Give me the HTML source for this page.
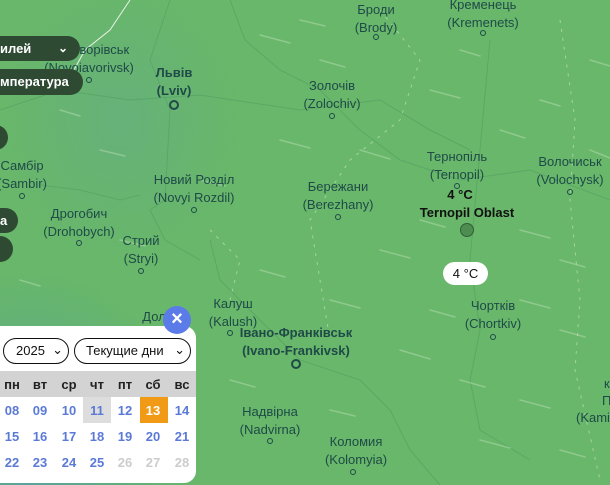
<!DOCTYPE html>
<html><head><meta charset="utf-8"><style>
*{margin:0;padding:0;box-sizing:border-box}
body{width:610px;height:485px;overflow:hidden;position:relative;font-family:"Liberation Sans","Noto Sans CJK SC",sans-serif;
background:radial-gradient(ellipse 170px 210px at 30px 480px,#5aa39c 0%,#60ad80 50%,rgba(103,182,106,0) 100%),radial-gradient(ellipse 120px 140px at 120px 120px,rgba(100,170,140,.45),rgba(103,182,106,0)),#68b76a}
.c{position:absolute;transform:translateX(-50%);text-align:center;color:#1f4a48;font-size:13px;line-height:17.5px;white-space:nowrap}
.b{font-weight:bold;font-size:13px}
.d{position:absolute;width:6px;height:6px;border:1.3px solid #1f4a48;border-radius:50%;transform:translate(-50%,-50%)}
.D{position:absolute;width:10px;height:10px;border:2px solid #1f4a48;border-radius:50%;transform:translate(-50%,-50%)}
.btn{position:absolute;background:#2e4a33;color:#fff;font-weight:bold;font-size:13px;border-radius:0 13px 13px 0;line-height:25px;padding-left:0}
svg{position:absolute;left:0;top:0}
.cal{position:absolute;left:0;top:326px;width:196px;height:157px;background:#fff;border-radius:0 12px 12px 0}
.sel{position:absolute;top:12px;height:26px;border:1.3px solid #111;border-radius:13px;font-size:13px;line-height:24px;color:#111}
.hdr{position:absolute;top:45px;left:0;width:196px;height:26px;background:#d3d3d3}
.t{position:absolute;width:28px;text-align:center;font-weight:bold;font-size:13px}
</style></head><body>
<svg width="610" height="485">
<g stroke="#4f9a60" stroke-width="1" fill="none" opacity=".5">
<path d="M170 0 L150 60 L170 110 L165 200 L150 210 L165 240 L200 260"/>
<path d="M0 110 L60 90 L130 100 L200 95 L300 110 L380 100 L430 130 L470 150"/>
<path d="M40 185 L80 190 L120 200 L140 195"/>
<path d="M230 0 L245 40 L280 70 L320 90 L360 130 L400 160 L460 180 L530 170 L610 200"/>
<path d="M490 40 L480 150 L470 260 L480 330 L470 380 L480 430 L530 460"/>
<path d="M210 240 L220 280 L260 320 L300 360 L360 380 L390 410 L410 450 L440 485"/>
</g>
<g stroke="#cfe8c4" stroke-width="1" fill="none" stroke-dasharray="3 6" opacity=".6">
<path d="M380 10 L420 60 L400 120 L350 160 L310 220 L320 280 L330 340"/>
<path d="M560 20 L575 120 L570 200 L580 300 L575 370 L600 480"/>
<path d="M210 230 L240 260 L230 300"/>
</g>
<g stroke="#c9e6c2" stroke-width="1.5" stroke-linecap="round" opacity=".4">
<path d="M260 35 l30 8M320 60 l25 7M430 90 l30 8M500 130 l25 8M540 100 l20 6M590 150 l20 8M280 140 l30 8M200 180 l25 6M360 150 l30 9M420 220 l25 7M520 230 l30 8M560 260 l25 7M380 250 l30 8M260 270 l25 7M330 300 l30 8M430 310 l25 7M520 300 l30 8M560 330 l25 7M400 350 l30 9M460 380 l25 7M520 400 l30 8M330 410 l25 6M230 380 l25 7M480 440 l30 8M560 450 l25 7M100 150 l25 6M60 110 l20 6M300 20 l25 6M460 50 l20 6M590 60 l20 6M120 240 l25 6M20 280 l20 6"/>
</g>
<path d="M130 0 L110 30 L85 50 L60 95" stroke="#e8f3e3" stroke-width="1" fill="none"/>
</svg>

<div class="c" style="left:376px;top:1px">Броди<br>(Brody)</div><div class="d" style="left:376px;top:37px"></div>
<div class="c" style="left:483px;top:-4px">Кременець<br>(Kremenets)</div><div class="d" style="left:483px;top:33px"></div>
<div class="c" style="left:89px;top:41px">Нововорівськ<br>(Novoiavorivsk)</div><div class="d" style="left:89px;top:80px"></div>
<div class="c b" style="left:174px;top:64px">Львів<br>(Lviv)</div><div class="D" style="left:174px;top:105px"></div>
<div class="c" style="left:332px;top:77px">Золочів<br>(Zolochiv)</div><div class="d" style="left:332px;top:116px"></div>
<div class="c" style="left:22px;top:157px">Самбір<br>(Sambir)</div><div class="d" style="left:22px;top:196px"></div>
<div class="c" style="left:194px;top:171px">Новий Розділ<br>(Novyi Rozdil)</div><div class="d" style="left:194px;top:210px"></div>
<div class="c" style="left:338px;top:178px">Бережани<br>(Berezhany)</div><div class="d" style="left:338px;top:217px"></div>
<div class="c" style="left:457px;top:148px">Тернопіль<br>(Ternopil)</div><div class="d" style="left:457px;top:186px"></div>
<div class="c" style="left:570px;top:153px">Волочиськ<br>(Volochysk)</div><div class="d" style="left:570px;top:192px"></div>
<div class="c" style="left:79px;top:205px">Дрогобич<br>(Drohobych)</div><div class="d" style="left:79px;top:243px"></div>
<div class="c" style="left:141px;top:232px">Стрий<br>(Stryi)</div><div class="d" style="left:141px;top:271px"></div>
<div class="c" style="left:233px;top:295px">Калуш<br>(Kalush)</div><div class="d" style="left:230px;top:333px"></div>
<div class="c b" style="left:296px;top:324px">Івано-Франківськ<br>(Ivano-Frankivsk)</div><div class="D" style="left:296px;top:364px"></div>
<div class="c" style="left:493px;top:297px">Чортків<br>(Chortkiv)</div><div class="d" style="left:493px;top:337px"></div>
<div class="c" style="left:270px;top:403px">Надвірна<br>(Nadvirna)</div><div class="d" style="left:270px;top:441px"></div>
<div class="c" style="left:356px;top:433px">Коломия<br>(Kolomyia)</div><div class="d" style="left:353px;top:472px"></div>
<div class="c" style="left:154px;top:308px">Дол</div>
<div class="c" style="top:375px;transform:none;left:604px">к</div>
<div class="c" style="left:602px;top:392px;transform:none">П</div>
<div class="c" style="left:576px;top:409px;transform:none">(Kami</div>

<div class="c b" style="left:460px;top:186px;color:#111;font-size:13px">4 °C</div>
<div class="c b" style="left:467px;top:204px;color:#111;font-size:13px">Ternopil Oblast</div>
<div style="position:absolute;left:460px;top:223px;width:14px;height:14px;border-radius:50%;background:#4e8d52;border:1px solid #2f5f35"></div>
<div style="position:absolute;left:443px;top:262px;width:45px;height:23px;border-radius:12px;background:#fff;color:#111;font-size:13px;line-height:23px;text-align:center">4 °C</div>

<div class="btn" style="left:-10px;top:36px;width:90px;height:25px;padding-left:10px">илей<span style="position:absolute;left:68px;top:0;font-size:12px">&#8964;</span></div>
<div class="btn" style="left:-10px;top:69px;width:93px;height:26px;padding-left:10px">мпература</div>
<div class="btn" style="left:-20px;top:125px;width:28px;height:25px"></div>
<div class="btn" style="left:-20px;top:208px;width:38px;height:25px;padding-left:20px">а</div>
<div class="btn" style="left:-20px;top:236px;width:33px;height:26px"></div>

<div class="cal">
<div class="sel" style="left:3px;width:66px;padding-left:12px">2025<span style="position:absolute;right:5px;top:-1px">&#8964;</span></div>
<div class="sel" style="left:74px;width:117px;padding-left:11px">Текущие дни<span style="position:absolute;right:5px;top:-1px">&#8964;</span></div>
<div class="hdr"></div>
<div style="position:absolute;left:83px;top:71px;width:28px;height:26px;background:#ddd"></div>
<div style="position:absolute;left:140px;top:71px;width:28px;height:26px;background:#f09a16"></div>
</div>
<div id="g"></div>
<script>
var xs=[12,40,69,97,125,153,182],h=['пн','вт','ср','чт','пт','сб','вс'],r=[['08','09','10','11','12','13','14'],['15','16','17','18','19','20','21'],['22','23','24','25','26','27','28']],s='';
for(var i=0;i<7;i++){s+='<div class="t" style="left:'+(xs[i]-14)+'px;top:377px;color:#222">'+h[i]+'</div>';
for(var j=0;j<3;j++){var c=(j==2&&i>3)?'#ccc':(j==0&&i==5?'#fff':'#5b7ad6');s+='<div class="t" style="left:'+(xs[i]-14)+'px;top:'+(403+j*26)+'px;color:'+c+'">'+r[j][i]+'</div>';}}
document.getElementById('g').innerHTML=s;
</script>
<div style="position:absolute;left:163px;top:306px;width:28px;height:28px;border-radius:50%;background:#5b7be9;color:#fff;font-weight:bold;font-size:20px;line-height:27px;text-align:center">×</div>
</body></html>
